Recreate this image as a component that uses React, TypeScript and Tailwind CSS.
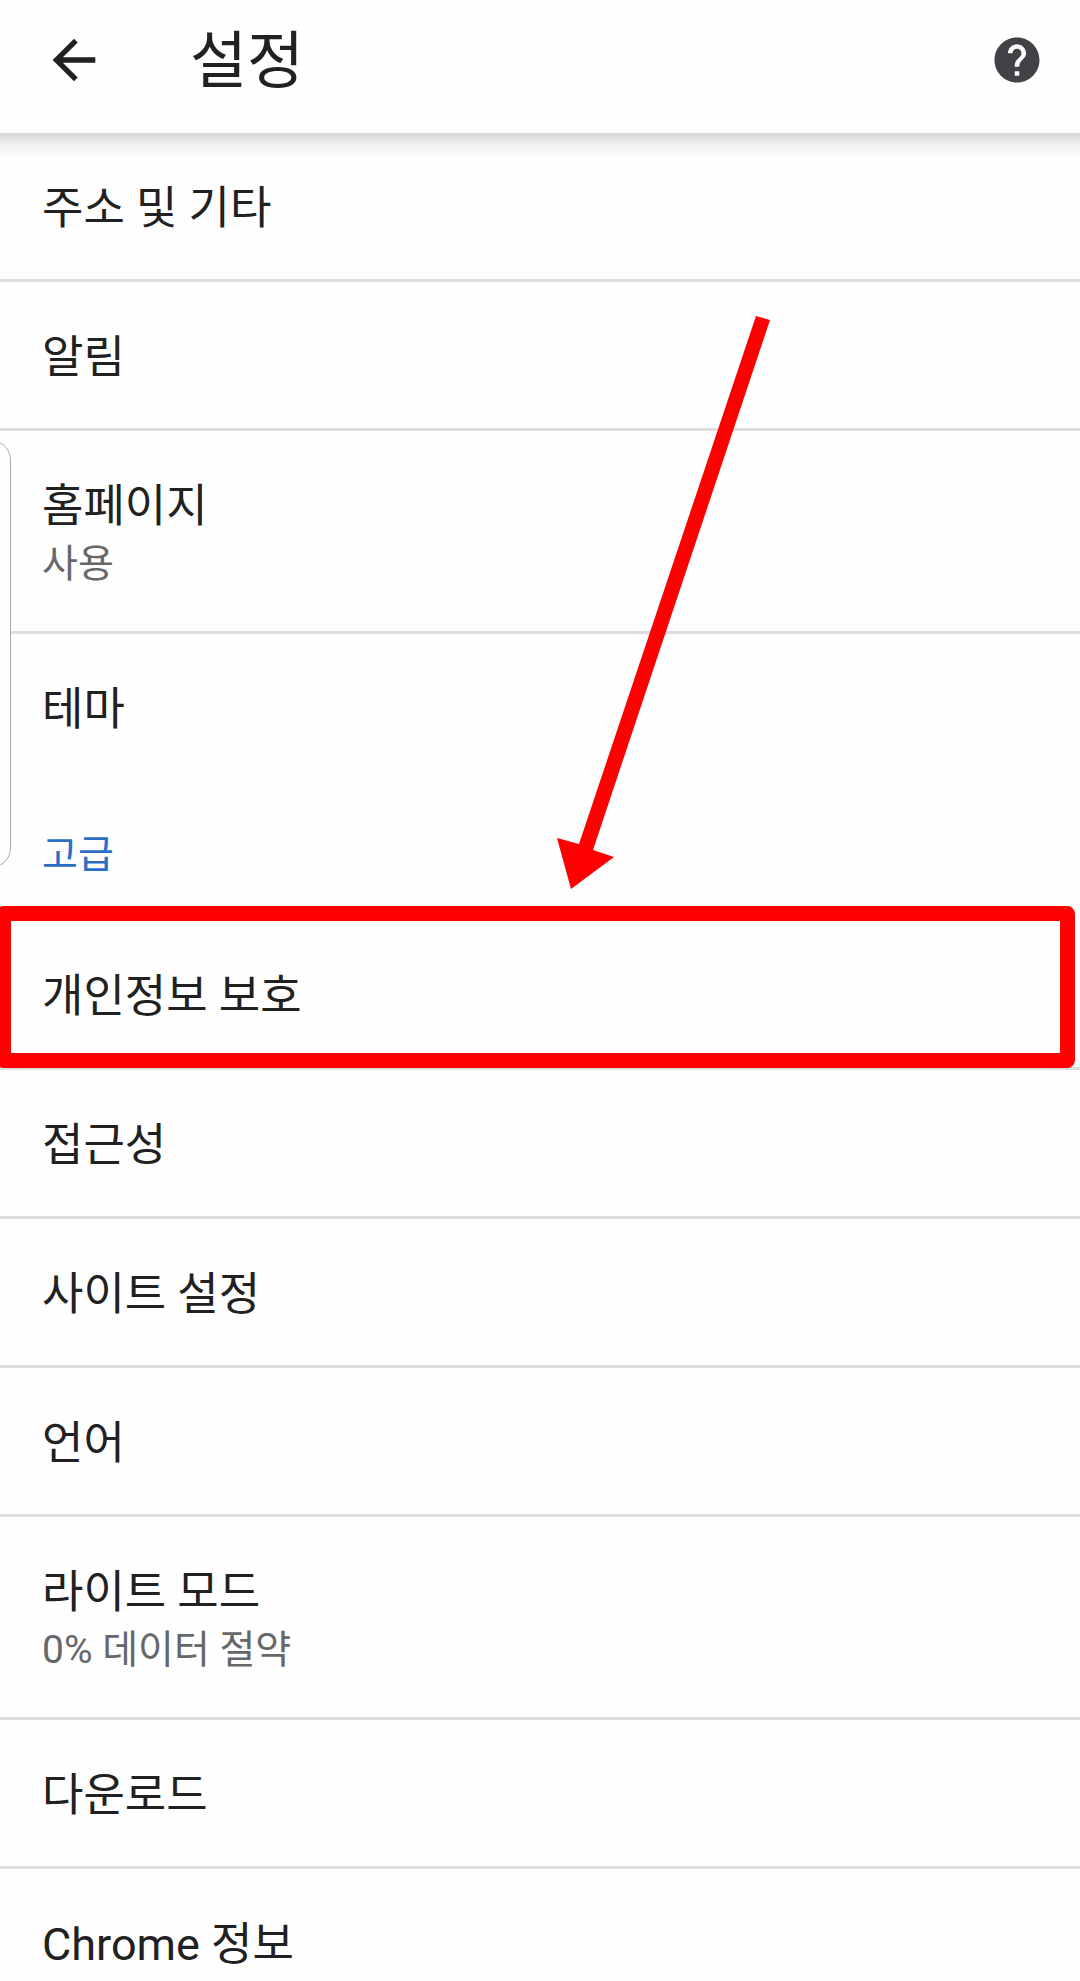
import { MdArrowBack, MdHelp } from "react-icons/md"

type Item = { title: string; summary?: string; highlighted?: boolean }

const basicItems: Item[] = [
  { title: "주소 및 기타" },
  { title: "알림" },
  { title: "홈페이지", summary: "사용" },
  { title: "테마" },
]

const advancedItems: Item[] = [
  { title: "개인정보 보호", highlighted: true },
  { title: "접근성" },
  { title: "사이트 설정" },
  { title: "언어" },
  { title: "라이트 모드", summary: "0% 데이터 절약" },
  { title: "다운로드" },
  { title: "Chrome 정보" },
]

export default function App() {
  return (
    <div className="flex h-screen flex-col overflow-hidden bg-[#fefefe] font-[Roboto,'Noto_Sans_CJK_KR',sans-serif] text-[#212121]">
      <header className="relative z-10 flex h-[133px] shrink-0 items-center bg-[#fefefe] pr-9 pl-[42px] pb-3.5">
        <button type="button" aria-label="뒤로">
          <MdArrowBack className="size-16" />
        </button>
        <h1 className="ml-[84px] flex-1 pt-1 text-[62px] leading-[72px]">설정</h1>
        <button type="button" aria-label="도움말" className="text-[#414245]">
          <MdHelp className="size-[54px]" />
        </button>
        <div className="absolute inset-x-0 top-full h-6 bg-linear-to-b from-black/16 via-black/5 to-transparent" />
      </header>

      <main className="relative flex-1">
        <SettingsList items={basicItems} />
        <h2 className="flex h-[141px] items-center px-[42px] pt-2 text-[39px] leading-[54px] text-[#2a6fc4]">고급</h2>
        <SettingsList items={advancedItems} />
        <EdgeHandle />
        <Arrow />
      </main>
    </div>
  )
}

function SettingsList({ items }: { items: Item[] }) {
  return (
    <ul>
      {items.map((item) => (
        <SettingsRow key={item.title} {...item} />
      ))}
    </ul>
  )
}

function SettingsRow({ title, summary, highlighted }: Item) {
  return (
    <li className="relative border-b-[3px] border-[#dedede] last:border-b-0">
      <button type="button" className="block w-full px-[42px] pt-[46px] pb-10 text-left">
        <span className="block text-[45px] leading-[60px]">{title}</span>
        {summary && <span className="block text-[39px] leading-[54px] text-[#66676a]">{summary}</span>}
      </button>
      {highlighted && (
        <div className="pointer-events-none absolute -top-[15px] right-[5px] -bottom-px -left-1 rounded-lg border-[15px] border-[#ff0000]" />
      )}
    </li>
  )
}

// edge panel handle, half hidden behind the left side of the screen
function EdgeHandle() {
  return (
    <div className="absolute top-[307px] -left-[30px] h-[428px] w-[41px] rounded-[20px] border border-[#aaaaaa] bg-[#fefefe]" />
  )
}

function Arrow() {
  return (
    <svg
      className="pointer-events-none absolute top-[183px] left-[557px] h-[574px] w-[214px]"
      viewBox="0 0 214 574"
      fill="#ff0000"
      aria-hidden="true"
    >
      <path d="M199 0L213 4L36 534L57 541L14 573L0 522L22 528Z" />
    </svg>
  )
}
